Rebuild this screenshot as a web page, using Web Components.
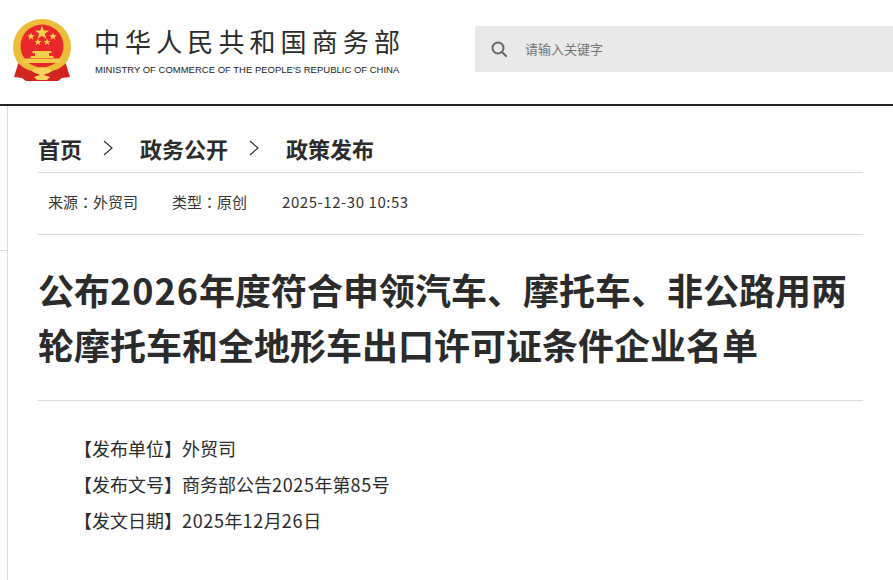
<!DOCTYPE html>
<html lang="zh-CN">
<head>
<meta charset="utf-8">
<title>商务部</title>
<style>
    html, body { margin: 0; padding: 0; background: #fff; overflow: hidden; }
    body { font-family: "Liberation Sans", "Noto Sans CJK SC", sans-serif; color: #2b2b2b; width: 893px; height: 580px; }
    .t { letter-spacing: 1px; }
    .n { letter-spacing: .65px; }
</style>
</head>
<body>
<site-header></site-header>
<page-body>
    <bread-crumbs items='["首页","政务公开","政策发布"]'></bread-crumbs>
    <article-meta></article-meta>
    <article-title>公布<span class="t">2026</span>年度符合申领汽车、摩托车、非公路用两<br>轮摩托车和全地形车出口许可证条件企业名单</article-title>
    <info-lines>
        <div>【发布单位】外贸司</div>
        <div>【发布文号】商务部公告<span class="n">2025</span>年第<span class="n">85</span>号</div>
        <div>【发文日期】<span class="n">2025</span>年<span class="n">12</span>月<span class="n">26</span>日</div>
    </info-lines>
</page-body>

<script>
const CJK = `"Noto Sans CJK SC", "Liberation Sans", sans-serif`;

class SiteHeader extends HTMLElement {
    constructor() {
        super();
        this.attachShadow({ mode: "open" });
        this.shadowRoot.innerHTML = `
        <style>
            :host { display: flex; height: 104px; border-bottom: 2px solid #222; box-sizing: content-box; }
            * { box-sizing: border-box; }
            .logo { display: flex; align-items: flex-start; padding: 19px 0 0 13px; width: 475px; flex: none; }
            svg.emblem { width: 58px; height: 62px; flex: none; }
            .names { margin-left: 24px; }
            .cn { font: 400 26px/34px ${CJK}; letter-spacing: 5.1px; color: #2b2b2b; margin: 5px 0 0 -1px; white-space: nowrap; }
            .en { font: 400 9.5px/12px "Liberation Sans", sans-serif; color: #222; margin: 6px 0 0 0; white-space: nowrap; }
            .search { flex: 1; height: 46px; margin-top: 26px; background: #e9e9e9; display: flex; align-items: center; padding-left: 16px; }
            .search svg { width: 16px; height: 16px; flex: none; }
            .search span { margin-left: 18px; font: 400 13px/18px ${CJK}; color: #757575; }
        </style>
        <div class="logo">
            <svg class="emblem" viewBox="0 0 58 62">
                <path d="M6 42 L1 58 L9 59 L13 62 L45 62 L49 59 L57 58 L52 42 Z" fill="#d3251f"/>
                <path d="M29 0 A29 28 0 0 1 52 45 C46 51 38 53 29 53 C20 53 12 51 6 45 A29 28 0 0 1 29 0 Z" fill="#eebd38"/>
                <circle cx="29" cy="27" r="21.500" fill="#e8282a"/>
                <polygon fill="#f6d04a" points="29,6.500 30.800,11.600 36,11.600 31.800,14.800 33.400,20 29,16.800 24.600,20 26.200,14.800 22,11.600 27.200,11.600"/>
                <polygon fill="#f6d04a" points="18,13.500 19,16.300 21.800,16.300 19.600,18 20.400,20.800 18,19.100 15.600,20.800 16.400,18 14.200,16.300 17,16.300"/>
                <polygon fill="#f6d04a" points="40,13.500 41,16.300 43.800,16.300 41.600,18 42.400,20.800 40,19.100 37.600,20.800 38.400,18 36.200,16.300 39,16.300"/>
                <polygon fill="#f6d04a" points="25,19.500 26,22 28.600,22 26.500,23.600 27.300,26.200 25,24.600 22.700,26.200 23.500,23.600 21.400,22 24,22"/>
                <polygon fill="#f6d04a" points="34,19.500 35,22 37.600,22 35.500,23.600 36.300,26.200 34,24.600 31.700,26.200 32.500,23.600 30.400,22 33,22"/>
                <path d="M20 32 H38 L39 34 H36 V37 H40 L41 39 H17 L18 37 H22 V34 H19 Z" fill="#f6d04a"/>
                <path d="M11 39.500 H47 L49 44 H9 Z" fill="#f4cb46"/>
                <path d="M19 52 C23 48 26 51 29 48 C32 51 35 48 39 52 C36 55 33 54 31 56 L37 58 L34 61 H24 L21 58 L27 56 C25 54 22 55 19 52 Z" fill="#f5d35c"/>
            </svg>
            <div class="names">
                <div class="cn">中华人民共和国商务部</div>
                <div class="en">MINISTRY OF COMMERCE OF THE PEOPLE'S REPUBLIC OF CHINA</div>
            </div>
        </div>
        <div class="search">
            <svg viewBox="0 0 16 16" fill="none" stroke="#666" stroke-width="2">
                <circle cx="7" cy="7" r="5.500"/>
                <path d="M10.800 10.800 L15 15" stroke-linecap="round"/>
            </svg>
            <span>请输入关键字</span>
        </div>
        `;
    }
}

class PageBody extends HTMLElement {
    constructor() {
        super();
        this.attachShadow({ mode: "open" });
        this.shadowRoot.innerHTML = `
        <style>
            :host { display: flex; height: 474px; }
            .rail { width: 8px; flex: none; border-right: 1px solid #dcdcdc; box-sizing: border-box; padding-top: 144px; }
            .rail div { height: 1px; background: #dcdcdc; }
            .main { flex: 1; padding: 0 30px; min-width: 0; }
        </style>
        <div class="rail"><div></div></div>
        <div class="main"><slot></slot></div>
        `;
    }
}

class BreadCrumbs extends HTMLElement {
    constructor() {
        super();
        this.attachShadow({ mode: "open" });
    }

    connectedCallback() {
        const items = JSON.parse(this.getAttribute("items") || "[]");
        const arrow = `<svg viewBox="0 0 10 16" fill="none" stroke="#333" stroke-width="1.200"><path d="M1 1 L9 8 L1 15"/></svg>`;
        this.shadowRoot.innerHTML = `
        <style>
            :host { display: flex; align-items: center; height: 48px; padding-top: 18px; border-bottom: 1px solid #dcdcdc; font: 700 22px/48px ${CJK}; color: #2b2b2b; }
            svg { width: 10px; height: 16px; margin: 0 27px 0 21px; flex: none; }
        </style>
        ${items.map((t, i) => (i ? arrow : "") + `<span>${t}</span>`).join("")}
        `;
    }
}

class ArticleMeta extends HTMLElement {
    constructor() {
        super();
        this.attachShadow({ mode: "open" });
        this.shadowRoot.innerHTML = `
        <style>
            :host { display: flex; align-items: center; padding: 0 0 3px 10px; box-sizing: border-box; height: 62px; border-bottom: 1px solid #dcdcdc; font: 400 15px/20px ${CJK}; color: #333; white-space: nowrap; }
            span + span { margin-left: 34px; }
            i { font-style: normal; font-family: "Noto Sans CJK TC", sans-serif; }
            .date { letter-spacing: .55px; margin-left: 35px; }
        </style>
        <span>来源<i lang="zh-Hant">：</i>外贸司</span><span>类型<i lang="zh-Hant">：</i>原创</span><span class="date">2025-12-30 10:53</span>
        `;
    }
}

class ArticleTitle extends HTMLElement {
    constructor() {
        super();
        this.attachShadow({ mode: "open" });
        this.shadowRoot.innerHTML = `
        <style>
            :host { display: block; padding: 27px 0 28px; border-bottom: 1px solid #dcdcdc; font: 700 36px/55px ${CJK}; color: #2b2b2b; }
        </style>
        <slot></slot>
        `;
    }
}

class InfoLines extends HTMLElement {
    constructor() {
        super();
        this.attachShadow({ mode: "open" });
        this.shadowRoot.innerHTML = `
        <style>
            :host { display: block; padding: 29px 0 0 36px; font: 400 18px/36px ${CJK}; color: #2b2b2b; }
        </style>
        <slot></slot>
        `;
    }
}

customElements.define("site-header", SiteHeader);
customElements.define("page-body", PageBody);
customElements.define("bread-crumbs", BreadCrumbs);
customElements.define("article-meta", ArticleMeta);
customElements.define("article-title", ArticleTitle);
customElements.define("info-lines", InfoLines);
</script>
</body>
</html>
